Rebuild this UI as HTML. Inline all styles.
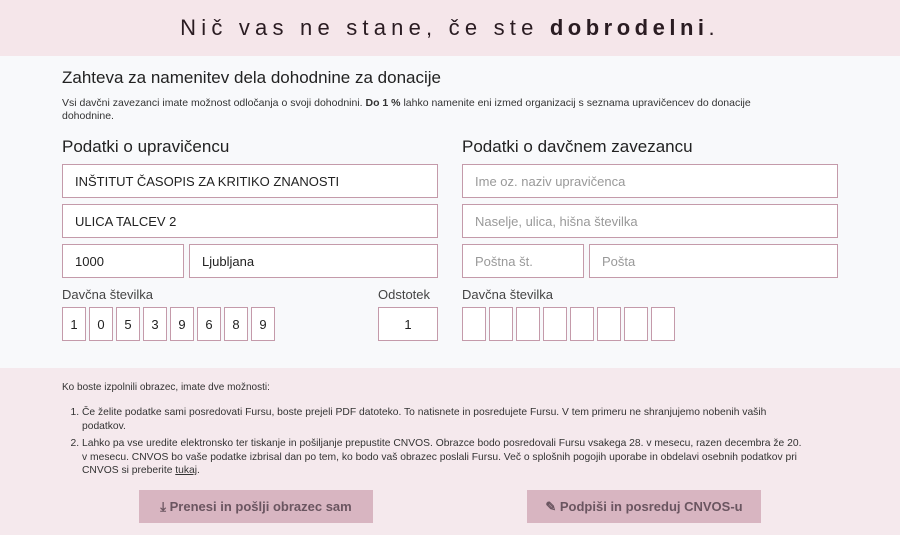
<!DOCTYPE html>
<html><head><meta charset="utf-8"><style>
*{box-sizing:border-box;margin:0;padding:0}
body{width:900px;height:535px;overflow:hidden;font-family:"Liberation Sans",sans-serif;color:#222;background:#f5e9ed}
.hdr{position:absolute;left:0;top:0;width:900px;height:56px;background:#f5e6ea;text-align:center;font-size:22px;letter-spacing:5.2px;line-height:56px;color:#2a1c22}
.hdr b{letter-spacing:4.5px}
.main{position:absolute;left:0;top:56px;width:900px;height:312px;background:#f8f9fb}
.a{position:absolute}
.in{position:absolute;height:34px;border:1px solid #c49aaa;background:#fff;font-size:13px;line-height:34px;padding-left:12px;color:#222}
.ph{color:#999}
.d{position:absolute;top:307px;width:24px;height:34px;border:1px solid #c49aaa;background:#fff;font-size:13px;line-height:34px;text-align:center}
.h2{font-size:17px;color:#222}
.lbl{font-size:13px;color:#444}
.btn{position:absolute;top:490px;height:33px;background:#d8b5c1;color:#6a5560;font-weight:bold;font-size:13px;text-align:center;line-height:33px}
li{margin-bottom:4px}
</style></head><body>
<div class="hdr">Nič vas ne stane, če ste <b>dobrodelni</b>.</div>
<div class="main"></div>
<div class="a" style="left:62px;top:68px;font-size:17px">Zahteva za namenitev dela dohodnine za donacije</div>
<div class="a" style="left:62px;top:97px;width:740px;font-size:10.5px;line-height:13px;color:#333">Vsi davčni zavezanci imate možnost odločanja o svoji dohodnini. <b>Do 1 %</b> lahko namenite eni izmed organizacij s seznama upravičencev do donacije dohodnine.</div>
<div class="a h2" style="left:62px;top:137px">Podatki o upravičencu</div>
<div class="a h2" style="left:462px;top:137px">Podatki o davčnem zavezancu</div>
<div class="in" style="left:62px;top:164px;width:376px">INŠTITUT ČASOPIS ZA KRITIKO ZNANOSTI</div>
<div class="in" style="left:62px;top:204px;width:376px">ULICA TALCEV 2</div>
<div class="in" style="left:62px;top:244px;width:122px">1000</div>
<div class="in" style="left:189px;top:244px;width:249px">Ljubljana</div>
<div class="in ph" style="left:462px;top:164px;width:376px">Ime oz. naziv upravičenca</div>
<div class="in ph" style="left:462px;top:204px;width:376px">Naselje, ulica, hišna številka</div>
<div class="in ph" style="left:462px;top:244px;width:122px">Poštna št.</div>
<div class="in ph" style="left:589px;top:244px;width:249px">Pošta</div>
<div class="a lbl" style="left:62px;top:287px">Davčna številka</div>
<div class="a lbl" style="left:378px;top:287px">Odstotek</div>
<div class="a lbl" style="left:462px;top:287px">Davčna številka</div>
<div class="d" style="left:62px">1</div><div class="d" style="left:89px">0</div><div class="d" style="left:116px">5</div><div class="d" style="left:143px">3</div><div class="d" style="left:170px">9</div><div class="d" style="left:197px">6</div><div class="d" style="left:224px">8</div><div class="d" style="left:251px">9</div>
<div class="d" style="left:378px;width:60px">1</div>
<div class="d" style="left:462px"></div><div class="d" style="left:489px"></div><div class="d" style="left:516px"></div><div class="d" style="left:543px"></div><div class="d" style="left:570px"></div><div class="d" style="left:597px"></div><div class="d" style="left:624px"></div><div class="d" style="left:651px"></div>
<div class="a" style="left:62px;top:382px;font-size:10px;color:#333">Ko boste izpolnili obrazec, imate dve možnosti:</div>
<ol class="a" style="left:82px;top:406px;width:720px;font-size:10.3px;line-height:13.5px;color:#333;padding-left:0">
<li>Če želite podatke sami posredovati Fursu, boste prejeli PDF datoteko. To natisnete in posredujete Fursu. V tem primeru ne shranjujemo nobenih vaših podatkov.</li>
<li>Lahko pa vse uredite elektronsko ter tiskanje in pošiljanje prepustite CNVOS. Obrazce bodo posredovali Fursu vsakega 28. v mesecu, razen decembra že 20. v mesecu. CNVOS bo vaše podatke izbrisal dan po tem, ko bodo vaš obrazec poslali Fursu. Več o splošnih pogojih uporabe in obdelavi osebnih podatkov pri CNVOS si preberite <u>tukaj</u>.</li>
</ol>
<div class="btn" style="left:139px;width:234px">⤓ Prenesi in pošlji obrazec sam</div>
<div class="btn" style="left:527px;width:234px">✎ Podpiši in posreduj CNVOS-u</div>
</body></html>
